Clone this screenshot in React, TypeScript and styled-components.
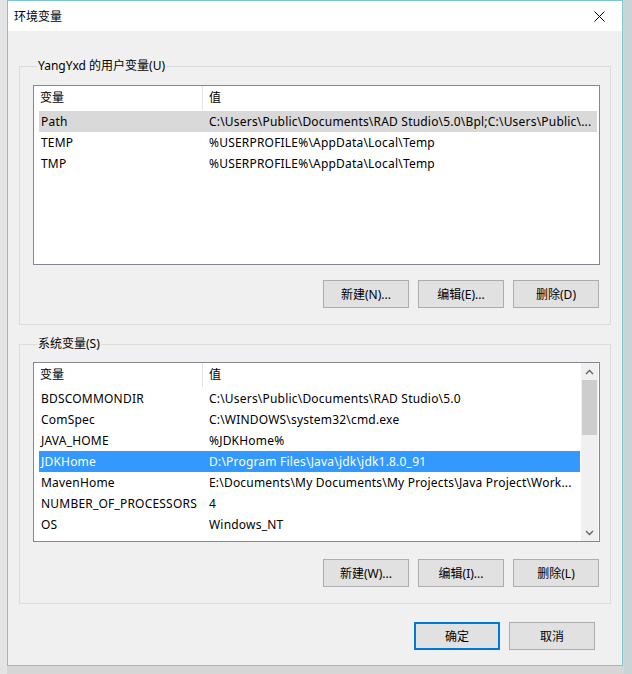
import React from 'react';
import styled, { createGlobalStyle } from 'styled-components';

const Global = createGlobalStyle`
  html, body { margin: 0; padding: 0; }
  body {
    background: #d9d9d9;
    font-family: "Noto Sans", "Noto Sans CJK SC", sans-serif;
    font-size: 12px;
    color: #000;
  }
  * { box-sizing: border-box; }
`;

const Desktop = styled.div`
  width: 632px;
  height: 674px;
  overflow: hidden;
  display: flex;
  align-items: flex-start;
  padding-left: 7px;
  background: linear-gradient(90deg, #e4e4e4 0 7px, #d6d6d6 7px 624px, #c9d4d6 624px);
`;

const Dialog = styled.div`
  width: 616px;
  height: 666px;
  border: 1px solid #7fc4d3;
  background: #f0f0f0;
  display: flex;
  flex-direction: column;
`;

const TitleBar = styled.div`
  height: 30px;
  flex: none;
  background: #fff;
  display: flex;
  align-items: center;
  justify-content: space-between;
  padding: 0 8px 0 6px;
  font-size: 12px;
`;

const CloseBtn = styled.div`
  width: 30px;
  height: 30px;
  display: flex;
  align-items: center;
  justify-content: center;
`;

const Body = styled.div`
  padding: 0 11px;
  display: flex;
  flex-direction: column;
`;

const Group = styled.fieldset<{ $top: number }>`
  margin: ${(p) => p.$top}px 0 0 0;
  border: 1px solid #dcdcdc;
  padding: 0 10px 16px 13px;
  min-width: 0;
  display: flex;
  flex-direction: column;
`;

const Legend = styled.legend`
  padding: 0 1px;
  margin-left: 4px;
  line-height: 16px;
  font-size: 12px;
  color: #000;
`;

const ListBox = styled.div<{ $gap: number }>`
  margin-top: ${(p) => p.$gap}px;
  width: 100%;
  height: 180px;
  border: 1px solid #828790;
  background: #fff;
  display: flex;
  overflow: hidden;
`;

const ListMain = styled.div`
  flex: 1;
  min-width: 0;
  display: flex;
  flex-direction: column;
  overflow: hidden;
`;

const Header = styled.div`
  height: 25px;
  flex: none;
  display: grid;
  grid-template-columns: 168px 1px 1fr;
  align-items: stretch;
`;

const HeaderCell = styled.div`
  padding-left: 6px;
  display: flex;
  align-items: center;
  padding-bottom: 4px;
`;

const HeaderDivider = styled.div`
  background: #e5e5e5;
  margin-bottom: 1px;
`;

const Row = styled.div<{ $sel?: 'inactive' | 'active'; $mr: number }>`
  height: 21px;
  flex: none;
  margin: 0 ${(p) => p.$mr}px 0 5px;
  display: grid;
  grid-template-columns: 168px 1fr;
  align-items: center;
  white-space: nowrap;
  letter-spacing: 0.2px;
  background: ${(p) => (p.$sel === 'active' ? '#3399ff' : p.$sel === 'inactive' ? '#d9d9d9' : 'transparent')};
  color: ${(p) => (p.$sel === 'active' ? '#fff' : '#000')};
`;

const Cell = styled.div`
  padding-left: 2px;
  overflow: hidden;
`;

const ScrollBar = styled.div`
  width: 17px;
  flex: none;
  background: #f0f0f0;
  display: flex;
  flex-direction: column;
  margin-right: 1px;
`;

const ScrollArrow = styled.div`
  height: 17px;
  flex: none;
  display: flex;
  align-items: center;
  justify-content: center;
`;

const ScrollTrack = styled.div`
  flex: 1;
  display: flex;
  flex-direction: column;
`;

const Thumb = styled.div`
  height: 55px;
  margin: 0 1px;
  background: #cdcdcd;
`;

const ButtonRow = styled.div<{ $gap: number; $pr: number }>`
  margin-top: ${(p) => p.$gap}px;
  padding-right: ${(p) => p.$pr}px;
  display: flex;
  justify-content: flex-end;
  gap: 9px;
`;

const Button = styled.div<{ $default?: boolean }>`
  width: 86px;
  height: 28px;
  background: #e1e1e1;
  border: ${(p) => (p.$default ? '2px solid #0078d7' : '1px solid #adadad')};
  display: flex;
  align-items: center;
  justify-content: center;
  font-size: 12px;
  padding-bottom: 1px;
`;

type Item = { name: string; value: string; sel?: 'inactive' | 'active' };

const userVars: Item[] = [
  { name: 'Path', value: 'C:\\Users\\Public\\Documents\\RAD Studio\\5.0\\Bpl;C:\\Users\\Public\\...', sel: 'inactive' },
  { name: 'TEMP', value: '%USERPROFILE%\\AppData\\Local\\Temp' },
  { name: 'TMP', value: '%USERPROFILE%\\AppData\\Local\\Temp' },
];

const sysVars: Item[] = [
  { name: 'BDSCOMMONDIR', value: 'C:\\Users\\Public\\Documents\\RAD Studio\\5.0' },
  { name: 'ComSpec', value: 'C:\\WINDOWS\\system32\\cmd.exe' },
  { name: 'JAVA_HOME', value: '%JDKHome%' },
  { name: 'JDKHome', value: 'D:\\Program Files\\Java\\jdk\\jdk1.8.0_91', sel: 'active' },
  { name: 'MavenHome', value: 'E:\\Documents\\My Documents\\My Projects\\Java Project\\Work...' },
  { name: 'NUMBER_OF_PROCESSORS', value: '4' },
  { name: 'OS', value: 'Windows_NT' },
];

const Chevron = ({ up }: { up?: boolean }) => (
  <svg width="9" height="6" viewBox="0 0 9 6">
    <path d={up ? 'M1 5 L4.5 1.5 L8 5' : 'M1 1 L4.5 4.5 L8 1'} fill="none" stroke="#606060" strokeWidth="1.3" />
  </svg>
);

const List = ({ items, scroll }: { items: Item[]; scroll?: boolean }) => (
  <>
    <ListMain>
      <Header>
        <HeaderCell>变量</HeaderCell>
        <HeaderDivider />
        <HeaderCell>值</HeaderCell>
      </Header>
      {items.map((it, i) => (
        <Row key={i} $sel={it.sel} $mr={scroll ? 1 : 2}>
          <Cell>{it.name}</Cell>
          <Cell>{it.value}</Cell>
        </Row>
      ))}
    </ListMain>
    {scroll && (
      <ScrollBar>
        <ScrollArrow>
          <Chevron up />
        </ScrollArrow>
        <ScrollTrack>
          <Thumb />
        </ScrollTrack>
        <ScrollArrow>
          <Chevron />
        </ScrollArrow>
      </ScrollBar>
    )}
  </>
);

export default function App() {
  return (
    <>
      <Global />
      <Desktop>
        <Dialog>
          <TitleBar>
            <span>环境变量</span>
            <CloseBtn>
              <svg width="11" height="11" viewBox="0 0 11 11">
                <path d="M0.5 0.5 L10.5 10.5 M10.5 0.5 L0.5 10.5" stroke="#000" strokeWidth="1" />
              </svg>
            </CloseBtn>
          </TitleBar>
          <Body>
            <Group $top={27}>
              <Legend>YangYxd 的用户变量(U)</Legend>
              <ListBox $gap={11}>
                <List items={userVars} />
              </ListBox>
              <ButtonRow $gap={15} $pr={1}>
                <Button>新建(N)...</Button>
                <Button>编辑(E)...</Button>
                <Button>删除(D)</Button>
              </ButtonRow>
            </Group>
            <Group $top={11}>
              <Legend>系统变量(S)</Legend>
              <ListBox $gap={10}>
                <List items={sysVars} scroll />
              </ListBox>
              <ButtonRow $gap={17} $pr={1}>
                <Button>新建(W)...</Button>
                <Button>编辑(I)...</Button>
                <Button>删除(L)</Button>
              </ButtonRow>
            </Group>
            <ButtonRow $gap={18} $pr={16}>
              <Button $default>确定</Button>
              <Button>取消</Button>
            </ButtonRow>
          </Body>
        </Dialog>
      </Desktop>
    </>
  );
}
